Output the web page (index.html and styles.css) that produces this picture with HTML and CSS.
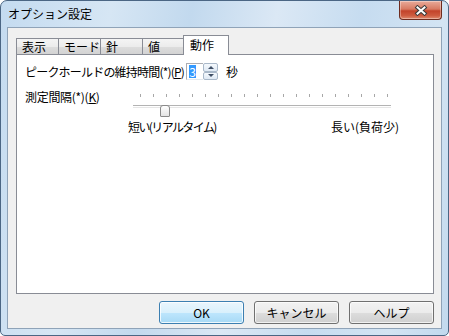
FILE: index.html
```html
<!DOCTYPE html>
<html lang="ja">
<head>
	<meta charset="UTF-8">
	<title>オプション設定</title>
	<link rel="stylesheet" href="styles.css">
</head>
<body>
<div class="window">
	<!-- タイトルバー -->
	<div class="titlebar">
		<span class="title">オプション設定</span>
		<button class="close" type="button">
			<svg width="14" height="11" viewBox="0 0 14 11">
				<path d="M3.5 2.5 L10.5 8.5 M10.5 2.5 L3.5 8.5" stroke="#3a3a3a" stroke-width="4" stroke-linecap="square" fill="none"/>
				<path d="M3.5 2.5 L10.5 8.5 M10.5 2.5 L3.5 8.5" stroke="#fff" stroke-width="2" stroke-linecap="square" fill="none"/>
			</svg>
		</button>
	</div>
	<!-- クライアント領域 -->
	<div class="client">
		<ul class="tabs">
			<li class="tab">表示</li>
			<li class="tab">モード</li>
			<li class="tab">針</li>
			<li class="tab tab-narrow">値</li>
			<li class="tab active">動作</li>
		</ul>
		<div class="panel">
			<div class="row">
				<label class="label label-hold">ピークホールドの維持時間(*)(<u>P</u>)</label>
				<div class="spin">
					<span class="spin-edit"><span class="sel">3</span></span>
					<span class="spin-btns">
						<span class="spin-btn"><i class="arrow-up"></i></span>
						<span class="spin-btn"><i class="arrow-down"></i></span>
					</span>
				</div>
				<span class="unit">秒</span>
			</div>
			<div class="row row-slider">
				<label class="label label-interval">測定間隔(*)(<u>K</u>)</label>
				<div class="slider">
					<div class="ticks">
						<i></i><i></i><i></i><i></i><i></i><i></i><i></i><i></i><i></i><i></i>
						<i></i><i></i><i></i><i></i><i></i><i></i><i></i><i></i><i></i><i></i>
					</div>
					<div class="track"><span class="thumb"></span></div>
					<div class="slider-labels">
						<span class="short">短い(リアルタイム)</span>
						<span>長い(負荷少)</span>
					</div>
				</div>
			</div>
		</div>
		<!-- ボタン -->
		<div class="buttons">
			<button class="btn btn-default" type="button">OK</button>
			<button class="btn" type="button">キャンセル</button>
			<button class="btn" type="button">ヘルプ</button>
		</div>
	</div>
</div>
</body>
</html>
```

FILE: styles.css
```css
body {
	margin: 0;
	padding: 0;
	font-family: "Noto Sans CJK JP", "Noto Sans", sans-serif;
	font-size: 12px;
	color: #000;
}

.window {
	width: 449px;
	height: 336px;
	box-sizing: border-box;
	border: 1px solid #4b6684;
	border-radius: 7px 7px 5px 5px;
	padding: 0 6px 6px 6px;
	background: linear-gradient(100deg, #c4dbf0 0%, #d6e6f4 22%, #c2d9ee 38%, #dbe8f5 55%, #c6dcf0 72%, #d3e4f3 88%, #c2d9ee 100%);
	overflow: hidden;
}

.titlebar {
	height: 26px;
	display: flex;
	justify-content: space-between;
	align-items: flex-start;
}

.title {
	margin: 5px 0 0 1px;
	line-height: 16px;
	font-size: 12px;
}

.close {
	width: 43px;
	height: 19px;
	margin: 0;
	padding: 0;
	border: 1px solid #6e2c1f;
	border-top: none;
	border-radius: 0 0 4px 4px;
	background: linear-gradient(#e9ab9a 0%, #d87a62 45%, #c3432a 55%, #cd5a3e 80%, #e08a6e 100%);
	box-shadow: inset 0 0 0 1px rgba(255, 255, 255, 0.35);
	display: flex;
	align-items: center;
	justify-content: center;
}

.client {
	height: 302px;
	box-sizing: border-box;
	border: 1px solid #8fa3b8;
	background-color: #f0f0f0;
	padding: 7px 7px 4px 8px;
	display: flex;
	flex-direction: column;
}

/* タブ */
.tabs {
	list-style: none;
	margin: 0;
	padding: 0;
	height: 19px;
	display: flex;
	align-items: flex-end;
}

.tab {
	width: 43px;
	height: 16px;
	box-sizing: border-box;
	margin-left: -1px;
	padding-left: 5px;
	border: 1px solid #898c95;
	border-bottom: none;
	background: linear-gradient(#f4f4f4 0%, #ececec 50%, #dddddd 51%, #d3d3d3 100%);
	line-height: 15px;
}

.tab:first-child {
	margin-left: 0;
}

.tab-narrow {
	width: 42px;
}

.tab.active {
	position: relative;
	z-index: 1;
	width: 46px;
	height: 20px;
	margin-bottom: -1px;
	padding-left: 6px;
	background: #fff;
	line-height: 17px;
}

.panel {
	height: 240px;
	box-sizing: border-box;
	border: 1px solid #898c95;
	background-color: #fff;
	padding: 8px 0 0 8px;
}

.row {
	display: flex;
	align-items: center;
	height: 17px;
}

.label {
	flex-shrink: 0;
	line-height: 16px;
	white-space: nowrap;
}

.label-hold {
	width: 161px;
	letter-spacing: -0.8px;
}

.label-interval {
	width: 103px;
	letter-spacing: -0.3px;
}

/* スピンボタン */
.spin {
	display: flex;
	height: 17px;
}

.spin-edit {
	width: 17px;
	box-sizing: border-box;
	border: 1px solid #abadb3;
	border-right: none;
	border-bottom-color: #e3e9ef;
	padding: 1px 0 0 2px;
	display: flex;
}

.sel {
	background-color: #3399ff;
	color: #fff;
	width: 7px;
	height: 13px;
	line-height: 13px;
	text-align: center;
}

.spin-btns {
	width: 15px;
	display: flex;
	flex-direction: column;
}

.spin-btn {
	flex: 1;
	box-sizing: border-box;
	border: 1px solid #a9b8c9;
	border-radius: 2px;
	background: linear-gradient(#f5f9fd, #dfe9f4);
	display: flex;
	align-items: center;
	justify-content: center;
}

.arrow-up, .arrow-down {
	width: 0;
	height: 0;
	border-left: 3px solid transparent;
	border-right: 3px solid transparent;
}

.arrow-up {
	border-bottom: 3px solid #3f4f66;
}

.arrow-down {
	border-top: 3px solid #3f4f66;
}

.unit {
	margin-left: 8px;
	line-height: 16px;
}

/* スライダー */
.row-slider {
	height: auto;
	align-items: flex-start;
	margin-top: 9px;
}

.slider {
	width: 271px;
}

.ticks {
	display: flex;
	justify-content: space-between;
	height: 3px;
	margin-top: 5px;
	padding: 0 11px 0 12px;
}

.ticks i {
	width: 1px;
	height: 3px;
	background-color: #a7a7a7;
}

.track {
	position: relative;
	height: 13px;
	margin: 3px 8px 0 5px;
}

.track:before {
	content: '';
	display: block;
	margin-top: 8px;
	height: 1px;
	border-top: 1px solid #b3b3b3;
	border-bottom: 1px solid #e6e6e6;
}

.thumb {
	position: absolute;
	left: 27px;
	top: 0;
	width: 10px;
	height: 12px;
	box-sizing: border-box;
	border: 1px solid #8a8a8a;
	border-radius: 3px 3px 1px 1px;
	background: linear-gradient(#ffffff, #e4e4e4);
}

.slider-labels {
	display: flex;
	justify-content: space-between;
	line-height: 16px;
	margin-top: 1px;
	white-space: nowrap;
}

.slider-labels .short {
	letter-spacing: -1.6px;
}

/* ボタン */
.buttons {
	display: flex;
	justify-content: flex-end;
	gap: 10px;
	margin-top: 7px;
}

.btn {
	width: 85px;
	height: 23px;
	padding: 0;
	border: 1px solid #707070;
	border-radius: 3px;
	background: linear-gradient(#f2f2f2 0%, #ebebeb 50%, #dddddd 51%, #cfcfcf 100%);
	box-shadow: inset 0 0 0 1px rgba(255, 255, 255, 0.7);
	font-family: "Noto Sans CJK JP", "Noto Sans", sans-serif;
	font-size: 12px;
	color: #000;
	line-height: 20px;
}

.btn-default {
	border-color: #3c7fb1;
	background: linear-gradient(#eaf6fd 0%, #d9f0fc 50%, #bee6fd 51%, #a7d9f5 100%);
	box-shadow: inset 0 0 0 1px rgba(255, 255, 255, 0.8);
}
```
